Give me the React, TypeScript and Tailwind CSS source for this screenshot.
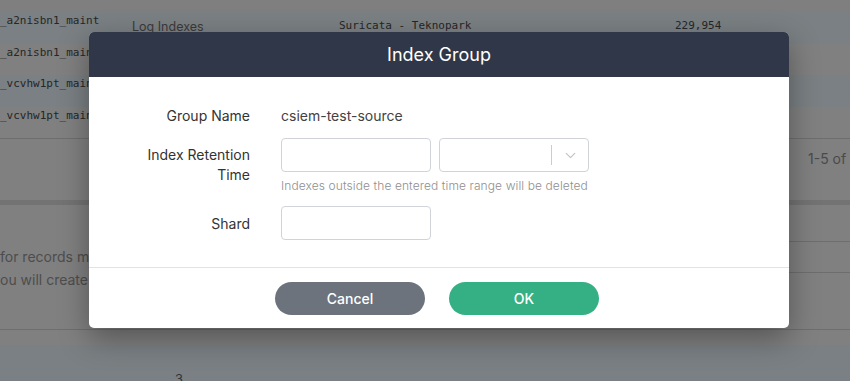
import { ChevronDown } from "lucide-react";

const rows = [
  { id: "_a2nisbn1_maint", type: "Log Indexes", source: "Suricata - Teknopark", count: "229,954", blue: true },
  { id: "_a2nisbn1_maint", type: "", source: "", count: "", blue: false },
  { id: "_vcvhw1pt_maint", type: "", source: "", count: "", blue: true },
  { id: "_vcvhw1pt_maint", type: "", source: "", count: "", blue: false },
];

const Background = () => (
  <div className="w-[850px] h-[381px] overflow-hidden bg-[#808080] text-[#262626]">
    <div className="h-[12px] bg-[#7f7f7f]" />
    {rows.map((r, i) => (
      <div
        key={i}
        className={`flex h-[31.5px] ${r.blue ? "bg-[#7a8083]" : "bg-[#808080]"}`}
      >
        <div className="w-[132px] pt-[1px] font-['DejaVu_Sans_Mono',monospace] text-[11px]">{r.id}</div>
        <div className="w-[207px] pt-[6px] font-['Inter',sans-serif] text-[12.5px] text-[#3a3a3a]">{r.type}</div>
        <div className="w-[336px] pt-[6px] font-['DejaVu_Sans_Mono',monospace] text-[11px]">{r.source}</div>
        <div className="pt-[6px] font-['DejaVu_Sans_Mono',monospace] text-[11px]">{r.count}</div>
      </div>
    ))}
    <div className="h-[62px] border-t border-[#6e6e6e] flex justify-end pt-[9px]">
      <span className="font-['Inter',sans-serif] text-[14px] text-[#4a4a4a] w-[42px] whitespace-nowrap">1-5 of</span>
    </div>
    <div className="h-[5px] bg-[#737373]" />
    <div className="flex h-[125px] border-b border-[#6e6e6e]">
      <div className="w-[780px] pt-[40px] font-['Inter',sans-serif] text-[14px] text-[#4d4d4d] leading-[23px]">
        <div>for records more</div>
        <div>ou will create log</div>
      </div>
      <div className="flex-1 flex flex-col pt-[36px]">
        <div className="h-[31px] border-t border-[#6e6e6e]" />
        <div className="h-[30px] border-t border-[#6e6e6e]" />
      </div>
    </div>
    <div className="h-[15px]" />
    <div className="h-[40px] bg-[#7a8083] pl-[175px] pt-[25px] font-['Inter',sans-serif] text-[13px] text-[#333]">3</div>
  </div>
);

const Modal = () => (
  <div className="w-[700px] rounded-[5px] bg-white shadow-[0_10px_30px_rgba(0,0,0,0.35)] font-['Inter',sans-serif]">
    <div className="h-[45px] rounded-t-[5px] bg-[#2f3748] flex items-center justify-center">
      <span className="text-white text-[18px]">Index Group</span>
    </div>
    <div className="pt-[28px] pb-[27px] flex flex-col">
      <div className="flex items-center h-[20px]">
        <div className="w-[161px] text-right text-[14px] text-[#333]">Group Name</div>
        <div className="pl-[31px] text-[14px] text-[#424242]">csiem-test-source</div>
      </div>
      <div className="flex mt-[13px]">
        <div className="w-[161px] text-right text-[14px] text-[#333] leading-[20px] pt-[7px]">
          Index Retention
          <br />
          Time
        </div>
        <div className="pl-[31px] flex flex-col">
          <div className="flex gap-[8px]">
            <input className="w-[150px] h-[34px] rounded-[4px] border border-[#d0d4d9] outline-none" />
            <div className="w-[150px] h-[34px] rounded-[4px] border border-[#d0d4d9] flex items-center justify-end">
              <div className="w-px h-[20px] bg-[#cccccc]" />
              <div className="w-[36px] flex justify-center">
                <ChevronDown size={17} strokeWidth={1.75} className="text-[#c4c4c4]" />
              </div>
            </div>
          </div>
          <div className="mt-[5px] text-[12px] font-light text-[#8f8f8f] tracking-[0.1px]">
            Indexes outside the entered time range will be deleted
          </div>
        </div>
      </div>
      <div className="flex items-center mt-[11px]">
        <div className="w-[161px] text-right text-[14px] text-[#333]">Shard</div>
        <div className="pl-[31px]">
          <input className="w-[150px] h-[34px] rounded-[4px] border border-[#d0d4d9] outline-none" />
        </div>
      </div>
    </div>
    <div className="border-t border-[#e3e3e3] h-[61px] flex items-center justify-center gap-[24px] pr-[4px]">
      <button className="w-[150px] h-[33px] rounded-full bg-[#6c737d] text-white text-[14px] font-medium">
        Cancel
      </button>
      <button className="w-[150px] h-[33px] rounded-full bg-[#34b084] text-white text-[14px] font-medium">
        OK
      </button>
    </div>
  </div>
);

const App = () => {
  return (
    <div className="relative w-[850px] h-[381px] overflow-hidden">
      <Background />
      <div className="absolute inset-0 pl-[89px] pt-[32px]">
        <Modal />
      </div>
    </div>
  );
};

export default App;
